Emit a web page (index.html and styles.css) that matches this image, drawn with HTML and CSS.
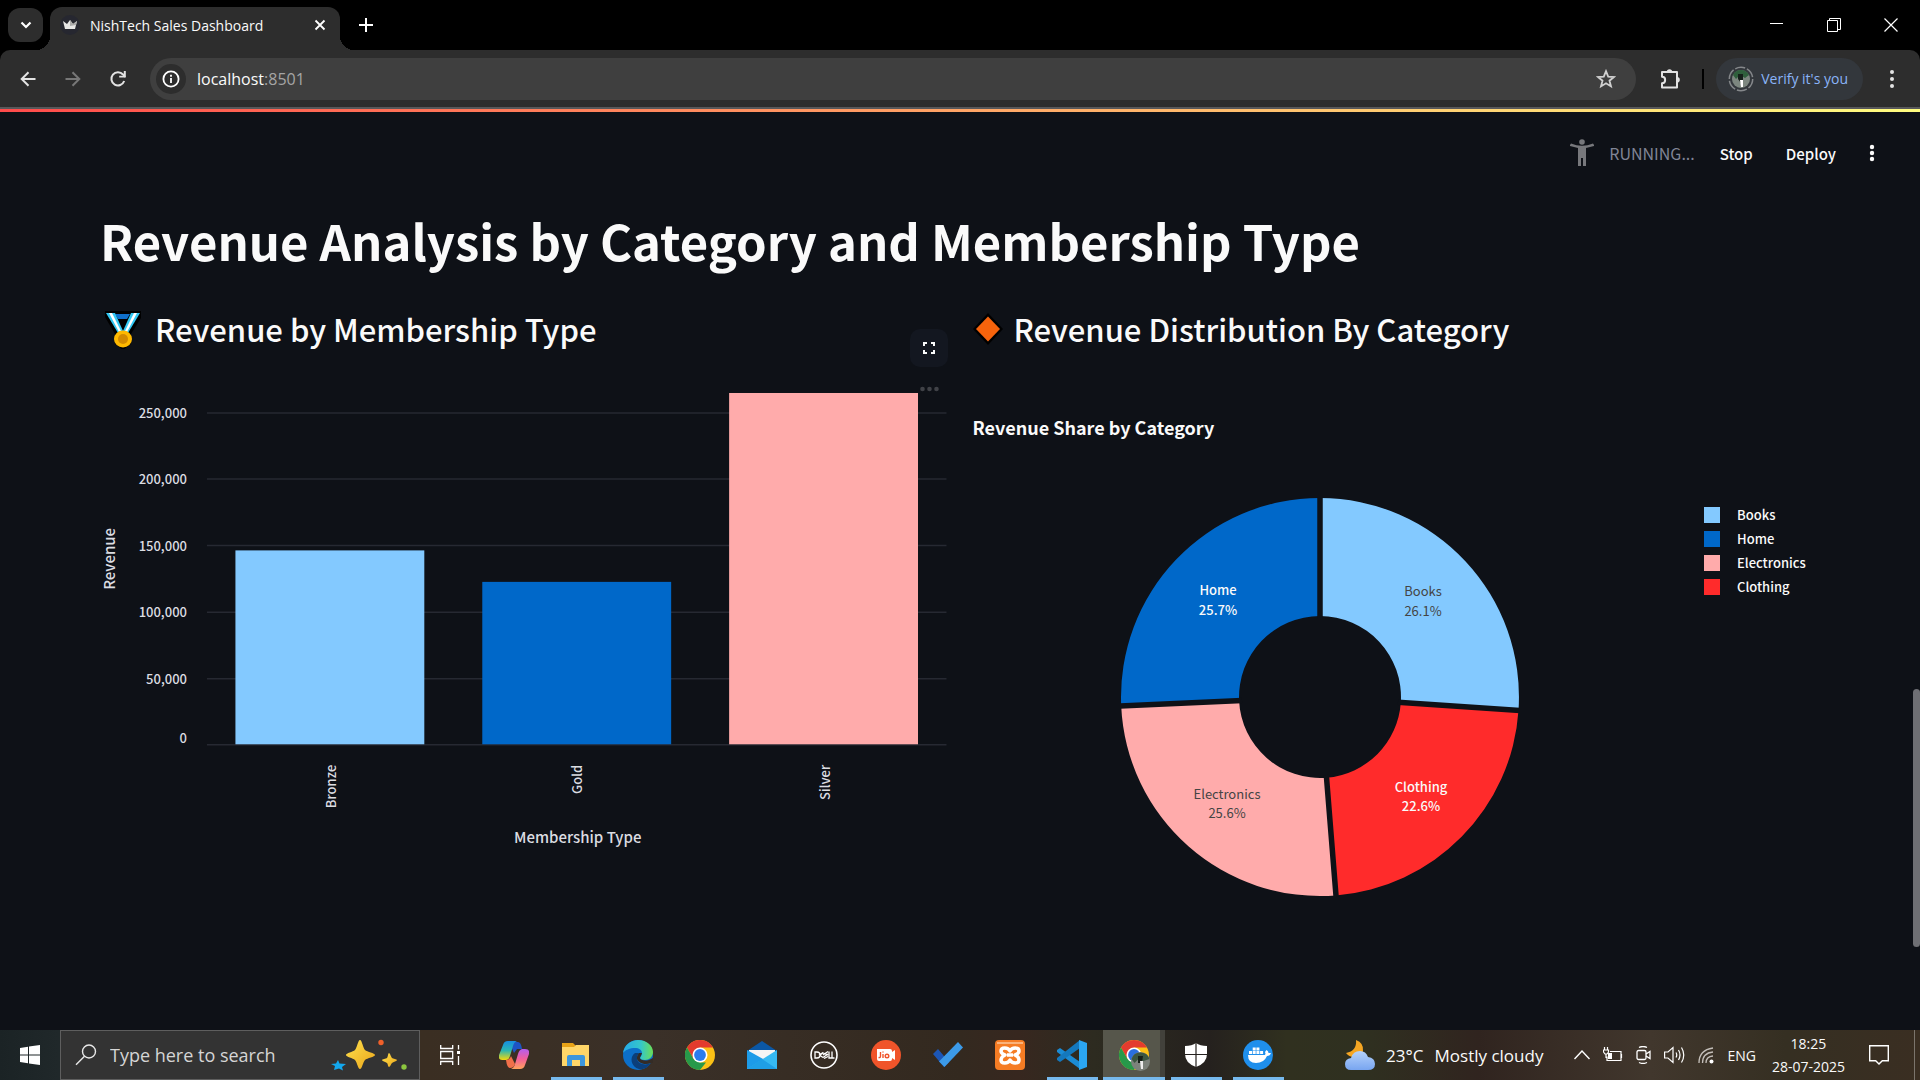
FILE: index.html
```html
<!DOCTYPE html>
<html lang="en">
<head>
<meta charset="utf-8">
<title>NishTech Sales Dashboard</title>
<link rel="stylesheet" href="styles.css">
</head>
<body>
<header class="browser">
  <div class="tabstrip">
    <button class="tab-search" aria-label="Search tabs"><svg width="12" height="8" viewBox="0 0 12 8"><path d="M1.500 1.500L6 6l4.500-4.500" fill="none" stroke="#fff" stroke-width="2.200"/></svg></button>
    <div class="tab">
      <svg width="20" height="20" viewBox="0 0 20 20"><circle cx="10" cy="10" r="10" fill="#262730"/><path d="M3 6l4 3 3-4 3 4 4-3-2 8H5z" fill="#e6e6e6"/><path d="M10 5l3 4 4-3-1 4-6 1z" fill="#aaa"/></svg>
      <span class="tab-title">NishTech Sales Dashboard</span>
      <button class="icon-btn tab-close" aria-label="Close tab"><svg width="12" height="12" viewBox="0 0 12 12"><path d="M1.500 1.500l9 9m0-9l-9 9" stroke="#fff" stroke-width="1.800"/></svg></button>
    </div>
    <button class="icon-btn new-tab" aria-label="New tab"><svg width="14" height="14" viewBox="0 0 14 14"><path d="M7 0v14M0 7h14" stroke="#fff" stroke-width="2"/></svg></button>
    <div class="window-controls">
      <button class="icon-btn" aria-label="Minimize"><svg width="14" height="14" viewBox="0 0 14 14"><path d="M0 5.500h13" stroke="#fff"/></svg></button>
      <button class="icon-btn" aria-label="Restore"><svg width="14" height="14" viewBox="0 0 14 14"><path d="M.5 2.500h10v11H.5zM2.500 2.500v-2h11v11h-3" fill="none" stroke="#fff"/></svg></button>
      <button class="icon-btn" aria-label="Close"><svg width="14" height="14" viewBox="0 0 14 14"><path d="M.5.5l13 13m0-13l-13 13" stroke="#fff" stroke-width="1.200"/></svg></button>
    </div>
  </div>
  <div class="toolbar">
    <button class="icon-btn nav-btn" aria-label="Back"><svg width="16" height="16" viewBox="0 0 16 16"><path d="M15.500 8H2M8.500 1.200L1.700 8l6.800 6.800" fill="none" stroke="#e3e3e3" stroke-width="2"/></svg></button>
    <button class="icon-btn nav-btn" aria-label="Forward"><svg width="16" height="16" viewBox="0 0 16 16"><path d="M.5 8H14M7.500 1.200L14.300 8l-6.800 6.800" fill="none" stroke="#777" stroke-width="2"/></svg></button>
    <button class="icon-btn nav-btn" aria-label="Reload"><svg width="18" height="18" viewBox="0 0 18 18"><path d="M15.200 11A6.600 6.600 0 1 1 14 4.500L16 7" fill="none" stroke="#e3e3e3" stroke-width="2"/><path d="M16.800 1v6.600h-6.600V5.700h4.600V1z" fill="#e3e3e3"/></svg></button>
    <div class="omnibox">
      <span class="site-info"><svg width="18" height="18" viewBox="0 0 18 18"><circle cx="9" cy="9" r="7.600" fill="none" stroke="#fff" stroke-width="1.800"/><path d="M9 8v5M9 4.800v2" stroke="#fff" stroke-width="1.800"/></svg></span>
      <span class="url">localhost<span class="port">:8501</span></span>
      <button class="icon-btn star" aria-label="Bookmark"><svg width="20" height="20" viewBox="0 0 20 20"><path d="M10 2.200l2.200 5.400 5.800.4-4.500 3.700 1.500 5.700-5-3.100-5 3.100 1.500-5.700L2 8l5.800-.4z" fill="none" stroke="#d0d0d0" stroke-width="1.800"/></svg></button>
    </div>
    <button class="icon-btn extensions" aria-label="Extensions"><svg width="22" height="22" viewBox="0 0 22 22"><path d="M2 4h15v15.500H2V15.200c4.200 0 4.200-6.400 0-6.400z" fill="none" stroke="#e3e3e3" stroke-width="2" stroke-linejoin="round"/><path d="M6.800 4a2.700 2.700 0 0 1 5.400 0zM17 8.900a2.800 2.800 0 0 1 0 5.600z" fill="#e3e3e3"/></svg></button>
    <span class="divider"></span>
    <button class="verify">
      <svg width="26" height="26" viewBox="0 0 26 26"><circle cx="13" cy="13" r="11.700" fill="none" stroke="#85888b" stroke-width="1.500" stroke-dasharray="10.200 2"/><circle cx="13" cy="13" r="9" fill="#7d8780"/><path d="M5 9a9 9 0 0 1 16 0l-4 3-5-3-4 4z" fill="#2f5f3c"/><path d="M10 8h5v6l-2 3-3-4z" fill="#16201a"/><path d="M12 14h3v7h-2z" fill="#fff"/></svg>
      <span>Verify it's you</span>
    </button>
    <button class="icon-btn menu" aria-label="Menu"><svg width="6" height="20" viewBox="0 0 6 20"><g fill="#e3e3e3"><circle cx="3" cy="3" r="2"/><circle cx="3" cy="10" r="2"/><circle cx="3" cy="17" r="2"/></g></svg></button>
  </div>
</header>

<div class="app">
  <div class="decoration"></div>
  <header class="app-header">
    <svg width="24" height="28" viewBox="0 0 24 28"><g fill="#77787c"><circle cx="12" cy="3" r="2.800"/><path d="M0 6l1-1.500Q12 9 23 4.500L24 6v1l-8 2v18h-3v-8h-2v8H8V9L0 7z"/></g></svg>
    <span class="status">RUNNING...</span>
    <button class="text-btn">Stop</button>
    <button class="text-btn">Deploy</button>
    <button class="icon-btn" aria-label="App menu"><svg width="6" height="20" viewBox="0 0 6 20"><g fill="#fafafa"><circle cx="3" cy="4" r="2.200"/><circle cx="3" cy="10" r="2.200"/><circle cx="3" cy="16" r="2.200"/></g></svg></button>
  </header>

  <main class="content">
    <h1>Revenue Analysis by Category and Membership Type</h1>
    <div class="columns">
      <section class="column">
        <h2><svg width="44" height="40" viewBox="0 0 44 40"><path d="M5 2h36v7L31 25v10l-8 6-8-6V25L5 8z" fill="#000"/><path d="M15 5h15l-3 5h-9z" fill="#0f6fca"/><path d="M6 4h9l8 18-5 2z" fill="#32c8f4"/><path d="M40 4h-9l-8 18 5 2z" fill="#32c8f4"/><path d="M9 4h3l9 18-2 1zM37 4h-3l-9 18 2 1z" fill="#fff"/><ellipse cx="23" cy="30" rx="9" ry="8.500" fill="#ffb900"/><circle cx="23" cy="30" r="5" fill="#d38a00"/></svg><span>Revenue by Membership Type</span></h2>
        <button class="fullscreen" aria-label="Fullscreen"><svg width="12" height="12" viewBox="0 0 12 12"><path d="M1 4V1h3M8 1h3v3M11 8v3H8M4 11H1V8" fill="none" stroke="#fafafa" stroke-width="2"/></svg></button>
        <svg class="bar-chart" viewBox="0 0 848 480" role="img" aria-label="Revenue by membership type">
          <g fill="#404247"><circle cx="823" cy="9" r="2.300"/><circle cx="830" cy="9" r="2.300"/><circle cx="837" cy="9" r="2.300"/></g>
          <g stroke="#262932" stroke-width="1.500"><path d="M107 33h740M107 99h740M107 165.500h740M107 232.500h740M107 299h740M107 365h740"/></g>
          <rect x="135.500" y="170.500" width="189" height="194" fill="#83c9ff"/>
          <rect x="382.500" y="202" width="189" height="162.500" fill="#0068c9"/>
          <rect x="629.500" y="13" width="189" height="351.500" fill="#ffabab"/>
          <g class="axis-label" text-anchor="end">
            <text x="87" y="38">250,000</text><text x="87" y="104">200,000</text><text x="87" y="171">150,000</text><text x="87" y="237">100,000</text><text x="87" y="304">50,000</text><text x="87" y="363">0</text>
            <text transform="translate(236 385) rotate(-90)">Bronze</text>
            <text transform="translate(482 385) rotate(-90)">Gold</text>
            <text transform="translate(730 385) rotate(-90)">Silver</text>
          </g>
          <g class="axis-title" text-anchor="middle">
            <text transform="translate(15 179) rotate(-90)">Revenue</text>
            <text x="478" y="463">Membership Type</text>
          </g>
        </svg>
      </section>
      <section class="column">
        <h2><svg class="diamond" width="30" height="34" viewBox="0 0 30 34"><path d="M15 1l15 16-15 16L0 17z" fill="#000"/><path d="M15 4.500L27 17 15 29.500 3 17z" fill="#f7630c"/></svg><span>Revenue Distribution By Category</span></h2>
        <figure class="plot">
          <figcaption>Revenue Share by Category</figcaption>
          <svg class="donut" width="400" height="400" viewBox="-200 -200 400 400" role="img" aria-label="Revenue share by category">
            <path d="M0-199A199 199 0 0 1 198.500 13.500L80.800 5.500A81 81 0 0 0 0-81z" fill="#83c9ff"/>
            <path d="M198.500 13.500A199 199 0 0 1 16 198.400L6.500 80.700A81 81 0 0 0 80.800 5.500z" fill="#ff2b2b"/>
            <path d="M16 198.400A199 199 0 0 1-198.800 9L-80.900 3.700A81 81 0 0 0 6.500 80.700z" fill="#ffabab"/>
            <path d="M-198.800 9A199 199 0 0 1 0-199V-81A81 81 0 0 0-80.900 3.700z" fill="#0068c9"/>
            <path d="M0-200V-78M200 13.600L78 5.300M16.100 200L6.300 78M-200 9L-78 3.500" stroke="#0e1117" stroke-width="5.500"/>
            <g class="slice-label" text-anchor="middle">
              <g class="on-dark"><text x="-102" y="-102">Home</text><text x="-102" y="-82">25.7%</text><text x="101" y="95">Clothing</text><text x="101" y="114">22.6%</text></g>
              <g class="on-light"><text x="103" y="-101">Books</text><text x="103" y="-81">26.1%</text><text x="-93" y="102">Electronics</text><text x="-93" y="121">25.6%</text></g>
            </g>
          </svg>
          <ul class="legend">
            <li class="books">Books</li><li class="home">Home</li><li class="electronics">Electronics</li><li class="clothing">Clothing</li>
          </ul>
        </figure>
      </section>
    </div>
  </main>
  <div class="scroll-thumb"></div>
</div>

<footer class="taskbar">
  <button class="start" aria-label="Start"><svg width="20" height="20" viewBox="0 0 20 20"><path d="M0 3l8-1.200V9.400H0zM9 1.600L20 0v9.400H9zM0 10.500h8v7.700L0 17zM9 10.500h11V20L9 18.400z" fill="#fff"/></svg></button>
  <label class="search">
    <svg width="22" height="22" viewBox="0 0 22 22"><circle cx="14" cy="7.500" r="6.500" fill="none" stroke="#e8e8e8" stroke-width="1.400"/><path d="M9.500 12.200L1 20.800" stroke="#e8e8e8" stroke-width="1.400"/></svg>
    <input type="text" placeholder="Type here to search" aria-label="Search">
    <svg width="76" height="32" viewBox="0 0 76 32"><defs><linearGradient id="spark" x1="0" y1="0" x2="1" y2="1"><stop offset="0" stop-color="#ffe14d"/><stop offset="1" stop-color="#eaa51a"/></linearGradient></defs><path d="M29 1c2 0 3 8 5 10s10 3 10 5-8 3-10 5-3 9-5 9-3-7-5-9-9-3-9-5 7-3 9-5 3-10 5-10z" fill="url(#spark)"/><path d="M58 14c1 0 2 4 3 5s5 1 5 2-4 2-5 3-2 4-3 4-1-3-2-4-5-2-5-3 4-1 5-2 1-5 2-5z" fill="url(#spark)"/><path d="M7 21l1.500 3.500L15 25l-4 3 1 3.500-4-2L3 31l1-4-4-2 5-.500z" fill="#13a8ee"/><circle cx="50" cy="3.500" r="2.700" fill="#f0602a"/><circle cx="73" cy="28" r="2.700" fill="#8cc63f"/></svg>
  </label>
  <button class="task-view" aria-label="Task view"><svg width="20" height="20" viewBox="0 0 20 20"><path d="M.7 0v3.500h12V0M.7 6.500h12v7H.7zM.7 20v-3.500h12V20M18.500 0v4.500M18.500 11v9" fill="none" stroke="#fff" stroke-width="1.300"/><path d="M17 6h3v3h-3z" fill="#fff"/></svg></button>
  <nav class="apps">
    <button aria-label="Copilot"><svg width="30" height="28" viewBox="0 0 30 28"><defs><linearGradient id="cp1" x1="0" y1="0" x2="0" y2="1"><stop offset="0" stop-color="#168de2"/><stop offset=".5" stop-color="#2bb6b2"/><stop offset="1" stop-color="#f5d90a"/></linearGradient><linearGradient id="cp2" x1="0" y1="0" x2="0" y2="1"><stop offset="0" stop-color="#b35df0"/><stop offset=".5" stop-color="#f25f9a"/><stop offset="1" stop-color="#ffa35b"/></linearGradient></defs><path d="M19 1q3 0 4 7h-5l-3 4L11 3q1-2 3-2z" fill="#1d54c4"/><path d="M9 0h9q-3 1-4 5l-3 10q-1 4-4 4H3q-4 0-3-5L4 4q1-4 5-4z" fill="url(#cp1)"/><path d="M21 28h-9q3-1 4-5l3-10q1-4 4-5h3q5 0 4 5l-4 11q-1 4-5 4z" fill="url(#cp2)"/><path d="M11 27q-3 0-4-8 4 0 5-4l4 8q-1 4-5 4z" fill="#f0704a"/></svg></button>
    <button class="open" aria-label="File Explorer"><svg width="28" height="26" viewBox="0 0 28 26"><path d="M0 1h11l3 3v5H0z" fill="#e8a317"/><path d="M0 5h12l2-2h13v21H0z" fill="#ffd668"/><path d="M5 24V15q0-2 2-2h14q2 0 2 2v9h-5v-6h-8v6z" fill="#3c96dc"/></svg></button>
    <button class="open" aria-label="Edge"><svg width="30" height="30" viewBox="0 0 30 30"><defs><linearGradient id="eg1"><stop offset="0" stop-color="#25a9e8"/><stop offset=".6" stop-color="#35c7c9"/><stop offset="1" stop-color="#6bdf55"/></linearGradient></defs><circle cx="15" cy="15" r="15" fill="#0c6fc9"/><path d="M0 13C1 5 8 0 15 0c9 0 15 6 15 12 0 5-4 8-8 8-3 0-5-1-5-2s2-2 2-5-3-5-7-5C7 8 2 10 0 13z" fill="url(#eg1)"/><path d="M12 13c-6 4-4 14 4 16 6 1 10-3 12-6-6 3-13 1-14-4-.5-3 1-4 2-6z" fill="#0b3f7b"/><path d="M19 13c-1 3-2 4-2 5 0 2 6 4 11 1l2-1v5l-2 0c-5 2-12 1-14-4-.5-3 1-4 2-6z" fill="#342c26"/></svg></button>
    <button aria-label="Chrome"><svg width="30" height="30" viewBox="0 0 30 30"><circle cx="15" cy="15" r="15" fill="#fbc116"/><path d="M2 7.500A15 15 0 0 1 28 7.500H15L8.500 19z" fill="#e33b2e"/><path d="M2 7.500L8.500 19l6.500 3.500h6L15 30A15 15 0 0 1 2 7.500z" fill="#27994a"/><circle cx="15" cy="15" r="7.500" fill="#fff"/><circle cx="15" cy="15" r="5.900" fill="#2a7bee"/></svg></button>
    <button aria-label="Mail"><svg width="30" height="28" viewBox="0 0 30 28"><path d="M0 10L15 0l15 10v5H0z" fill="#0b57a4"/><path d="M2 9h26v8L15 22 2 17z" fill="#f5f5f5"/><path d="M0 9l18 10-6 9H0z" fill="#1d9be8"/><path d="M30 9v19H0z" fill="#36b9f2"/><path d="M0 28h30L15 18z" fill="#1f9fe6"/></svg></button>
    <button aria-label="Dell"><svg width="28" height="28" viewBox="0 0 28 28"><circle cx="14" cy="14" r="13" fill="none" stroke="#fff" stroke-width="1.600"/><path d="M5 11v6h2q3 0 3-3t-3-3zM19 10.500V17h2.500M22 10.500V17h2.500M13 11.500L9.500 14l3.500 2.500M13 14l5-3.500M10 14l3-2 5 2M13 16.500l5-3.500M14 17.500l4-2" fill="none" stroke="#fff" stroke-width="1.300"/></svg></button>
    <button aria-label="Jio"><svg width="30" height="30" viewBox="0 0 30 30"><circle cx="15" cy="15" r="15" fill="#f0542a"/><path d="M6 9h13q2 0 2 2v1l3-2v10l-3-2v1q0 2-2 2H8q-2 0-2-2z" fill="#fff"/><path d="M9.500 12v4q0 2-2 1.500M12 14v4M12 11.500v1" stroke="#f0542a" fill="none" stroke-width="1.400"/><circle cx="16" cy="16" r="1.800" fill="none" stroke="#f0542a" stroke-width="1.400"/></svg></button>
    <button aria-label="To Do"><svg width="30" height="26" viewBox="0 0 30 26"><path d="M0 12l5-5 11 13-5 5z" fill="#1c56b6"/><path d="M6 19.500L25 0l5 5.500L11.500 25z" fill="#3c9ae8"/></svg></button>
    <button aria-label="XAMPP"><svg width="30" height="30" viewBox="0 0 30 30"><rect width="30" height="30" rx="4" fill="#f57c24"/><path d="M2 2h26v2H2z" fill="#fab27a"/><path d="M15 11c-2-4-9-4-9 0 0 3 3 3 4 4-2 1-4 2-4 5 0 4 7 4 9 0 2 4 9 4 9 0 0-3-2-4-4-5 1-1 4-1 4-4 0-4-7-4-9 0zM12 15h6" fill="none" stroke="#fff" stroke-width="3.500" stroke-linejoin="round"/></svg></button>
    <button class="open" aria-label="Visual Studio Code"><svg width="30" height="30" viewBox="0 0 30 30"><path d="M0 10l3-2 20 14v7L0 12z" fill="#1b8bd4"/><path d="M0 20l3 2L23 8V0L0 18z" fill="#1478bd"/><path d="M22 0l8 3v24l-8 3z" fill="#2ba6f2"/></svg></button>
    <button class="open active" aria-label="Chrome, profile window"><svg width="32" height="32" viewBox="0 0 32 32"><circle cx="16" cy="16" r="15" fill="#fbc116"/><path d="M3 8.500A15 15 0 0 1 29 8.500H16L9.500 20z" fill="#e33b2e"/><path d="M3 8.500L9.500 20l6.500 3.500h6L16 31A15 15 0 0 1 3 8.500z" fill="#27994a"/><circle cx="16" cy="16" r="7.500" fill="#fff"/><circle cx="16" cy="16" r="5.900" fill="#2a6fe0"/><circle cx="22.500" cy="22.500" r="9.500" fill="#7c827b"/><path d="M13.500 20a9.500 9.500 0 0 1 18 0l-6 2-5-2-4 4z" fill="#3b5641"/><path d="M20 17h5l-1 7h-4z" fill="#172019"/><path d="M22 22h3v8h-2z" fill="#eee"/></svg></button>
    <button class="open" aria-label="Windows Security"><svg width="22" height="24" viewBox="0 0 22 24"><path d="M11 0q4 3 11 3v8q0 9-11 13Q0 20 0 11V3q7 0 11-3z" fill="#fff"/><path d="M11 0v24M0 11.500h22" stroke="#25221f" stroke-width="1.200"/></svg></button>
    <button class="open" aria-label="Docker"><svg width="30" height="30" viewBox="0 0 30 30"><circle cx="15" cy="15" r="15" fill="#1f8fec"/><path d="M4.500 15H22q1-1 0-3l1.500-2q2 1 2 3h2.500q-1 3-4 3-3 7-11 7-8 0-8-8z" fill="#fff"/><path d="M6 11h3v3H6zM9.700 11h3v3h-3zM13.400 11h3v3h-3zM17.100 11h3v3h-3zM9.700 7.500h3v3h-3zM13.400 7.500h3v3h-3z" fill="#fff"/></svg></button>
  </nav>
  <button class="weather">
    <svg width="30" height="30" viewBox="0 0 30 30"><defs><linearGradient id="cl" x1="0" y1="0" x2="0" y2="1"><stop offset="0" stop-color="#b5d2fb"/><stop offset="1" stop-color="#78a5f0"/></linearGradient></defs><path d="M11 0q8 3 7 11-1 6-9 6-5 0-8-4 11-2 10-13z" fill="#f5a623"/><path d="M6 30q-6 0-6-6 0-5 6-6 2-7 9-7 6 0 8 6 7 1 7 7 0 6-7 6z" fill="url(#cl)"/></svg>
    <span>23°C</span><span>Mostly cloudy</span>
  </button>
  <div class="tray">
    <svg width="16" height="10" viewBox="0 0 16 10"><path d="M.5 9L8 1l7.500 8" fill="none" stroke="#fff" stroke-width="1.400"/></svg>
    <svg width="20" height="16" viewBox="0 0 20 16"><path d="M7 4.500h11v9H4V9.500M18.500 7v4M1.500 0v2.500M4.500 0v2.500M.5 3h5v2L4 7H2L.5 5zM3 7v4" fill="none" stroke="#fff" stroke-width="1.200"/><path d="M5 6h4v6H5z" fill="#fff"/></svg>
    <svg width="15" height="18" viewBox="0 0 15 18"><rect x="1" y="4.500" width="9" height="9" rx="1.500" fill="none" stroke="#fff" stroke-width="1.300"/><path d="M10 8l4-2.500v7L10 10M3 1.500Q7-.5 11 1.500M3 16.500Q7 18.500 11 16.500" fill="none" stroke="#fff" stroke-width="1.300"/></svg>
    <svg width="21" height="18" viewBox="0 0 21 18"><path d="M.6 6H4l5-4.500v15L4 12H.6zM12 6.500q1.500 2.500 0 5M14.500 4q3 5 0 10M17.500 1.500q4.500 7.500 0 15" fill="none" stroke="#fff" stroke-width="1.200"/></svg>
    <svg width="16" height="17" viewBox="0 0 16 17"><path d="M1 16Q1 3 15 1M4.500 16Q4.500 6 15 5M8 16Q8 9.500 15 9" fill="none" stroke="#c4bfba" stroke-width="1.300"/><circle cx="13.500" cy="14.500" r="2" fill="#fff"/></svg>
    <span class="lang">ENG</span>
    <time class="clock" datetime="2025-07-28T18:25"><span>18:25</span><span>28-07-2025</span></time>
    <svg class="notify" width="20" height="20" viewBox="0 0 20 20"><path d="M.7.700h18.600v15h-6L10 19l-3.300-3.300h-6z" fill="none" stroke="#fff" stroke-width="1.400"/></svg>
    <span class="show-desktop"></span>
  </div>
</footer>
</body>
</html>
```
FILE: styles.css
```css
:root {
  --bg: #0e1117;
  --chrome: #2d2d2d;
  --ui: "Open Sans", "Noto Sans", sans-serif;
  --app: "Noto Sans CJK SC", "Noto Sans CJK JP", sans-serif;
}
* { box-sizing: border-box; }
body {
  margin: 0;
  min-height: 100vh;
  display: flex;
  flex-direction: column;
  background: var(--bg);
  color: #fafafa;
  font-family: var(--ui);
  font-size: 14px;
}
svg { display: block; flex: none; }
button {
  border: 0;
  padding: 0;
  margin: 0;
  background: none;
  color: inherit;
  font: inherit;
}
.icon-btn { display: grid; place-items: center; }

/* Browser frame */
.browser { background: #000; }
.tabstrip { display: flex; align-items: center; height: 50px; padding-left: 8px; }
.tab-search {
  display: grid;
  place-items: center;
  width: 35px;
  height: 34px;
  border-radius: 12px;
  background: var(--chrome);
}
.tab {
  position: relative;
  display: flex;
  align-items: center;
  gap: 10px;
  align-self: flex-end;
  width: 290px;
  height: 43px;
  margin-left: 7px;
  padding: 0 14px 7px 10px;
  border-radius: 12px 12px 0 0;
  background: var(--chrome);
}
.tab::before,
.tab::after {
  content: "";
  position: absolute;
  bottom: 0;
  width: 14px;
  height: 14px;
}
.tab::before { right: 100%; background: radial-gradient(circle at 0 0, transparent 14px, var(--chrome) 14px); }
.tab::after { left: 100%; background: radial-gradient(circle at 100% 0, transparent 14px, var(--chrome) 14px); }
.tab-title { flex: 1; white-space: nowrap; }
.new-tab { margin-left: 19px; }
.window-controls { display: flex; gap: 43px; margin-left: auto; padding-right: 22px; }
.toolbar {
  display: flex;
  align-items: center;
  height: 59px;
  padding: 0 25px 0 19px;
  border-bottom: 2px solid #58585a;
  border-radius: 10px 10px 0 0;
  background: var(--chrome);
}
.nav-btn { width: 18px; }
.nav-btn + .nav-btn { margin-left: 27px; }
.omnibox {
  flex: 1;
  display: flex;
  align-items: center;
  height: 42px;
  margin-left: 23px;
  padding: 0 20px 0 6px;
  border-radius: 21px;
  background: #3f3f3f;
}
.site-info {
  display: grid;
  place-items: center;
  width: 30px;
  height: 30px;
  margin-right: 11px;
  border-radius: 50%;
  background: var(--chrome);
}
.url { font-size: 16px; }
.port { color: #a5a5a5; }
.star { margin-left: auto; }
.extensions { margin-left: 24px; }
.divider { width: 2px; height: 20px; margin: 0 12px 0 20px; background: #000; }
.verify {
  display: flex;
  align-items: center;
  gap: 7px;
  height: 42px;
  padding: 0 15px 0 12px;
  border-radius: 21px;
  background: #33373c;
  color: #8ab4f8;
}
.menu { margin-left: 26px; }

/* Dashboard */
.app { position: relative; flex: 1; font-family: var(--app); }
.decoration { height: 3px; background: linear-gradient(90deg, #ff4b4b, #fffd80); }
.app-header {
  display: flex;
  align-items: center;
  justify-content: flex-end;
  height: 82px;
  padding-right: 45px;
  font-size: 16px;
}
.status { margin: 0 25px 0 15px; color: #808495; }
.text-btn { margin-right: 33px; font-size: 15px; font-weight: 500; }
.content { padding: 16px 100px 0; }
h1 { margin: 0 0 39px; font-size: 49px; line-height: 60px; font-weight: 700; }
.columns { display: grid; grid-template-columns: 1fr 1fr; gap: 25px; }
.column { position: relative; min-width: 0; }
h2 {
  display: flex;
  align-items: center;
  gap: 11px;
  margin: 0 0 31px;
  font-size: 31px;
  line-height: 40px;
  font-weight: 500;
  white-space: nowrap;
}
.fullscreen {
  position: absolute;
  top: 20px;
  right: 0;
  display: grid;
  place-items: center;
  width: 38px;
  height: 38px;
  border-radius: 10px;
  background: #131720;
}
.bar-chart { width: 100%; height: auto; overflow: visible; }
.bar-chart text { fill: #dcdde2; font-weight: 500; }
.axis-label { font-size: 13px; }
.axis-title { font-size: 15px; }
.plot {
  display: grid;
  grid-template-columns: 1fr auto;
  grid-template-rows: 117px auto;
  margin: 0;
}
figcaption {
  grid-column: 1 / -1;
  padding-top: 34px;
  font-size: 18px;
  line-height: 26px;
  font-weight: 700;
}
.donut { justify-self: end; }
.slice-label { font-size: 13px; }
.on-dark { fill: #fafafa; font-weight: 500; }
.on-light { fill: #444; }
.legend {
  width: 116px;
  margin: 6px 0 0 184px;
  padding: 0;
  list-style: none;
  font-size: 13px;
  font-weight: 500;
  line-height: 24px;
}
.legend li { display: flex; align-items: center; gap: 17px; }
.legend li::before { content: ""; width: 16px; height: 16px; background: currentColor; }
.legend .books::before { background: #83c9ff; }
.legend .home::before { background: #0068c9; }
.legend .electronics::before { background: #ffabab; }
.legend .clothing::before { background: #ff2b2b; }
.scroll-thumb {
  position: absolute;
  right: 0;
  top: 63%;
  width: 7px;
  height: 28%;
  border-radius: 4px;
  background: #6e6f74;
}

/* Taskbar */
.taskbar {
  display: flex;
  align-items: stretch;
  height: 50px;
  background: linear-gradient(90deg, #1b2325 0, #20282a 3%, #3a2e22 22%, #3a3028 34%, #33291f 50%, #37271f 53%, #2d2b20 57%, #25211e 63%, #30301f 67%, #2f3020 71%, #30241f 77%, #41372d 86%, #352f22 93%, #3a2e22 100%);
}
.start { display: grid; place-items: center; width: 60px; }
.search {
  display: flex;
  align-items: center;
  width: 360px;
  padding: 0 12px 0 14px;
  border: 1px solid #5e5e5e;
  background: #333;
}
.search input {
  flex: 1;
  min-width: 0;
  margin-left: 13px;
  padding: 0;
  border: 0;
  outline: 0;
  background: none;
  color: #d5d5d5;
  font: 18px var(--ui);
}
.search input::placeholder { color: #d5d5d5; opacity: 1; }
.task-view { display: grid; place-items: center; width: 60px; margin-right: 3px; }
.apps { display: flex; }
.apps button { position: relative; display: grid; place-items: center; width: 62px; }
.apps .open::after {
  content: "";
  position: absolute;
  right: 5px;
  bottom: 0;
  left: 6px;
  height: 3px;
  background: #76b9ed;
}
.apps .active { background: linear-gradient(90deg, #56564b 57px, #42413b 57px); }
.apps .active::after { right: 0; left: 0; }
.weather { display: flex; align-items: center; gap: 11px; margin-left: auto; font-size: 17px; white-space: nowrap; }
.tray { display: flex; align-items: center; gap: 13px; margin-left: 31px; padding-right: 5px; }
.lang { font-size: 14px; }
.clock { display: flex; flex-direction: column; align-items: center; margin-left: 3px; font-size: 14px; line-height: 23px; }
.notify { margin-left: 11px; }
.show-desktop { width: 1px; height: 100%; margin-left: 12px; background: #7b746c; }
```
